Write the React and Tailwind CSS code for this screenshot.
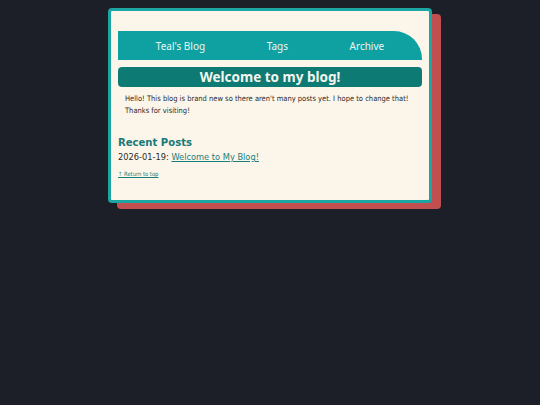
export default function App() {
    return (
        <div className="min-h-screen bg-[#1c1f27] pt-[8px]" style={{ fontFamily: "'DejaVu Sans Condensed', 'DejaVu Sans', Verdana, sans-serif" }}>
            <div className="mx-auto w-[324px] rounded-[4px] border-[3px] border-[#1ba6a4] bg-[#fcf5ea] px-[7px] pt-[20px] pb-[22px] shadow-[9px_6px_0_#c24f4f]">
                <nav
                    className="flex h-[29px] items-center justify-around rounded-tr-[28px] bg-[#0fa0a1] px-[7px] pt-[1px] text-[10px] text-[#eaf7f2]"
                    style={{ fontFamily: "'Noto Sans', sans-serif" }}
                >
                    <a href="#">Teal's Blog</a>
                    <a href="#">Tags</a>
                    <a href="#">Archive</a>
                </nav>
                <h1
                    className="mt-[7px] flex h-[20px] items-center justify-center rounded-[4px] bg-[#0e7a74] text-[13.5px] font-bold text-[#f3f6ee]"
                    style={{ fontFamily: "'Noto Sans', sans-serif" }}
                >
                    Welcome to my blog!
                </h1>
                <p className="mt-[6px] px-[7px] text-[7.5px] leading-[12px] text-[#2b2b2b]">
                    Hello! This blog is brand new so there aren't many posts yet. I hope to change that! Thanks for visiting!
                </p>
                <h2 className="mt-[18px] text-[11.2px] font-bold leading-[15px] text-[#177a78]">Recent Posts</h2>
                <div className="mt-[1px] text-[9.2px] leading-[12px] text-[#2b2b2b]">
                    2026-01-19: <a href="#" className="text-[#1a7f7c] underline">Welcome to My Blog!</a>
                </div>
                <a href="#" className="mt-[7px] block text-[5.8px] leading-[8px] text-[#1a7f7c] underline">↑ Return to top</a>
            </div>
        </div>
    );
}
